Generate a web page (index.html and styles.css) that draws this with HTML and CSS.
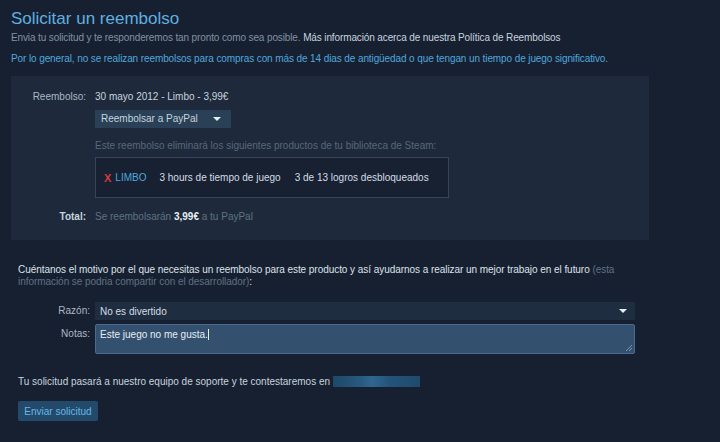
FILE: index.html
```html
<!DOCTYPE html>
<html lang="es">
  <head>
    <meta charset="UTF-8" />
    <meta name="viewport" content="width=device-width, initial-scale=1.0" />
    <title>Solicitar un reembolso</title>
    <link rel="stylesheet" href="styles.css">
  </head>
  <body>
    <!-- Header -->
    <div class="page">
      <h1 class="title">Solicitar un reembolso</h1>
      <p class="intro">
        Envia tu solicitud y te responderemos tan pronto como sea posible.
        <span class="intro-link">Más información acerca de nuestra Política de Reembolsos</span>
      </p>
      <p class="notice">
        Por lo general, no se realizan reembolsos para compras con más de 14 dias de antigüedad o que tengan un tiempo de juego significativo.
      </p>

      <!-- Refund summary -->
      <div class="summary">
        <div class="row">
          <div class="label">Reembolso:</div>
          <div class="value">
            <div>30 mayo 2012 - Limbo - 3,99€</div>
            <div class="dropdown">
              <span>Reembolsar a PayPal</span>
              <span class="arrow"></span>
            </div>
            <div class="removal-note">Este reembolso eliminará los siguientes productos de tu biblioteca de Steam:</div>
            <div class="product-box">
              <span class="remove-x">X</span>
              <span class="product-name">LIMBO</span>
              <span class="product-stat">3 hours de tiempo de juego</span>
              <span class="product-stat">3 de 13 logros desbloqueados</span>
            </div>
          </div>
        </div>
        <div class="row total-row">
          <div class="label total-label">Total:</div>
          <div class="value dim">Se reembolsarán <b class="amount">3,99€</b> a tu PayPal</div>
        </div>
      </div>

      <!-- Reason form -->
      <p class="reason-intro">
        Cuéntanos el motivo por el que necesitas un reembolso para este producto y así ayudarnos a realizar un mejor trabajo en el futuro
        <span class="dim">(esta</span><br>
        <span class="dim">información se podria compartir con el desarrollador)</span>:
      </p>

      <div class="form">
        <div class="form-label">Razón:</div>
        <div class="select">
          <span>No es divertido</span>
          <span class="arrow"></span>
        </div>
        <div class="form-label notes-label">Notas:</div>
        <div class="textarea">Este juego no me gusta.<span class="caret"></span><span class="grip"></span></div>
      </div>

      <p class="contact">
        Tu solicitud pasará a nuestro equipo de soporte y te contestaremos en <span class="blurred-email"></span>
      </p>

      <button class="submit">Enviar solicitud</button>
    </div>
  </body>
</html>
```

FILE: styles.css
```css
/* Global Styles */
body {
  margin: 0;
  background-color: #172030;
  font-family: "Liberation Sans", Arial, sans-serif;
  font-size: 10px;
  color: #c6d4df;
}

.page {
  padding: 9px 0 0 11px;
  width: 680px;
}

/* Header */
.title {
  margin: 0;
  font-size: 17px;
  font-weight: normal;
  color: #5fb0e0;
  line-height: 20px;
}

.intro {
  margin: 2px 0 0;
  color: #8092a3;
  line-height: 14px;
  letter-spacing: -0.12px;
}

.intro-link {
  color: #c6d4df;
}

.notice {
  margin: 7px 0 0;
  color: #4fa7de;
  line-height: 14px;
  letter-spacing: -0.1px;
}

/* Summary panel */
.summary {
  margin-top: 10px;
  width: 638px;
  background-color: #1e2a3b;
  padding: 14px 0 16px;
  box-sizing: border-box;
  height: 164px;
}

.row {
  display: grid;
  grid-template-columns: 75px 1fr;
  column-gap: 9px;
}

.label {
  text-align: right;
  color: #a9b8c6;
  line-height: 14px;
}

.value {
  line-height: 14px;
  color: #c6d4df;
}

.dim {
  color: #5f7184;
}

.dropdown {
  margin-top: 6px;
  width: 136px;
  height: 18px;
  background-color: #294056;
  display: flex;
  align-items: center;
  justify-content: space-between;
  padding: 0 10px 0 6px;
  box-sizing: border-box;
  color: #c6d4df;
}

.arrow {
  width: 0;
  height: 0;
  border-left: 4px solid transparent;
  border-right: 4px solid transparent;
  border-top: 4px solid #e6eef5;
}

.removal-note {
  margin-top: 11px;
  color: #56687b;
}

.product-box {
  margin-top: 4px;
  width: 354px;
  height: 41px;
  box-sizing: border-box;
  background-color: #172131;
  border: 1px solid #34465a;
  display: flex;
  align-items: center;
  padding-left: 8px;
}

.remove-x {
  color: #d43b3b;
  font-weight: bold;
  font-size: 11px;
  margin-right: 4px;
}

.product-name {
  color: #4fa7de;
  margin-right: 13px;
}

.product-stat {
  color: #d4dde5;
  margin-right: 14px;
}

.total-row {
  margin-top: 12px;
}

.total-label {
  color: #c6d4df;
  font-weight: bold;
}

.amount {
  color: #e6eef5;
}

/* Reason form */
.reason-intro {
  margin: 24px 0 0 7px;
  width: 620px;
  line-height: 12px;
  letter-spacing: -0.05px;
  color: #dbe3ea;
}

.form {
  margin: 14px 0 0 7px;
  display: grid;
  grid-template-columns: 72px 540px;
  column-gap: 5px;
  row-gap: 4px;
}

.form-label {
  text-align: right;
  color: #a9b8c6;
  line-height: 18px;
}

.notes-label {
  line-height: 20px;
}

.select {
  height: 18px;
  background-color: #1f2d40;
  display: flex;
  align-items: center;
  justify-content: space-between;
  padding: 0 8px 0 5px;
  color: #d4dde5;
}

.textarea {
  position: relative;
  height: 30px;
  box-sizing: border-box;
  background-color: #33506e;
  border: 1px solid #4a6b8f;
  border-radius: 2px;
  padding: 3px 4px;
  color: #e6eef5;
  line-height: 13px;
}

.caret {
  display: inline-block;
  width: 1px;
  height: 11px;
  background-color: #e6eef5;
  vertical-align: -2px;
}

/* textarea resize handle */
.grip {
  position: absolute;
  right: 2px;
  bottom: 2px;
  width: 6px;
  height: 6px;
  background: linear-gradient(135deg, transparent 45%, #7b93ab 45%, #7b93ab 55%, transparent 55%, transparent 70%, #7b93ab 70%, #7b93ab 80%, transparent 80%);
}

.contact {
  margin: 21px 0 0 7px;
  color: #c6d4df;
  line-height: 14px;
}

.blurred-email {
  display: inline-block;
  width: 87px;
  height: 11px;
  vertical-align: -2px;
  background: linear-gradient(90deg, #1e4866 0%, #27587e 30%, #2f6690 45%, #24537a 65%, #1f4a6c 100%);
  filter: blur(0.6px);
}

.submit {
  margin: 12px 0 0 7px;
  width: 80px;
  height: 20px;
  border: none;
  border-radius: 2px;
  background-color: #234a6a;
  color: #67b7e6;
  font-family: "Liberation Sans", Arial, sans-serif;
  font-size: 10px;
  padding: 0;
}
```
